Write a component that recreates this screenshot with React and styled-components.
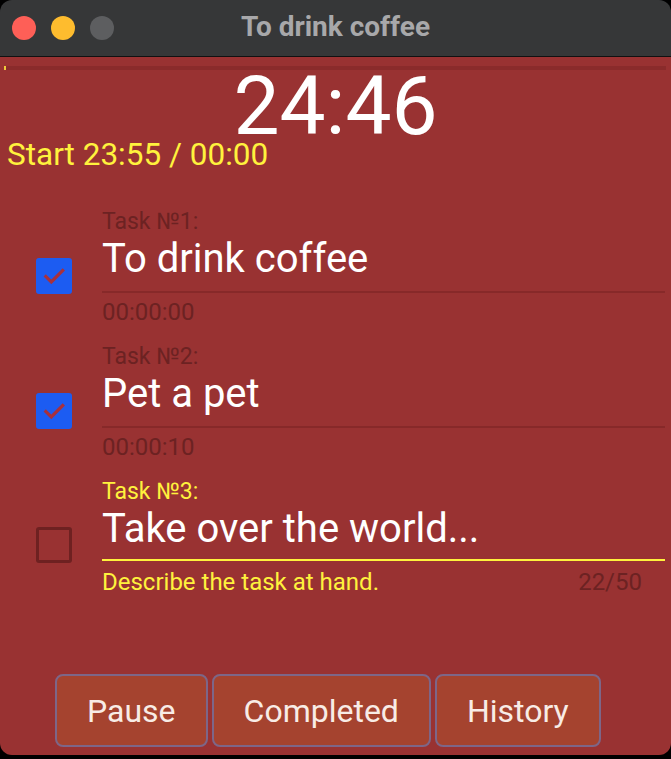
import React from "react";
import styled, { createGlobalStyle } from "styled-components";

const Global = createGlobalStyle`
  html, body { margin: 0; padding: 0; background: #000; }
  body { font-family: Roboto, "Liberation Sans", sans-serif; }
  * { box-sizing: border-box; }
`;

const Window = styled.div`
  width: 671px;
  height: 759px;
  background: #000;
  display: flex;
  flex-direction: column;
`;

const TitleBar = styled.div`
  height: 57px;
  background: #363738;
  border-top-left-radius: 12px;
  border-top-right-radius: 12px;
  border-bottom: 1px solid #111;
  display: flex;
  align-items: center;
  position: relative;
  padding-left: 12px;
  gap: 15px;
`;

const Light = styled.span`
  width: 24px;
  height: 24px;
  border-radius: 50%;
  background: ${(p) => p.$c};
`;

const Title = styled.div`
  position: absolute;
  left: 0;
  right: 0;
  top: 0;
  bottom: 0;
  display: flex;
  align-items: center;
  justify-content: center;
  font-weight: 700;
  font-size: 28px;
  color: #a8a8aa;
  padding-bottom: 3px;
`;

const Body = styled.div`
  flex: 1;
  background: #993232;
  border-bottom-left-radius: 12px;
  border-bottom-right-radius: 12px;
  display: flex;
  flex-direction: column;
  margin-bottom: 4px;
`;

const Progress = styled.div`
  margin: 9px 5px 0 4px;
  height: 4px;
  background: #8a2b2b;
  position: relative;
`;

const ProgressFill = styled.div`
  height: 100%;
  background: #f0c93a;
`;

const Timer = styled.div`
  font-size: 82px;
  line-height: 1;
  color: #fff;
  text-align: center;
  margin-top: -5px;
`;

const StartLine = styled.div`
  font-size: 31.5px;
  line-height: 1;
  color: #fff23d;
  padding-left: 7px;
  margin-top: -8px;
`;

const Tasks = styled.div`
  display: flex;
  flex-direction: column;
  margin-top: 39px;
`;

const TaskRow = styled.div`
  display: grid;
  grid-template-columns: 102px 1fr;
  padding-right: 6px;
  height: 135px;
`;

const CheckCell = styled.div`
  display: flex;
  align-items: flex-start;
  padding-left: 36px;
  padding-top: ${(p) => (p.$active ? 47 : 48)}px;
`;

const Box = styled.div`
  width: 36px;
  height: 36px;
  border-radius: 3px;
  background: ${(p) => (p.$checked ? "#1c5cf2" : "transparent")};
  border: ${(p) => (p.$checked ? "none" : "3px solid #6e2121")};
  display: flex;
  align-items: center;
  justify-content: center;
`;

const Field = styled.div`
  display: flex;
  flex-direction: column;
`;

const Label = styled.div`
  font-size: 23px;
  line-height: 24px;
  color: ${(p) => (p.$active ? "#fff23d" : "#6c2222")};
`;

const Value = styled.div`
  font-size: 40px;
  line-height: 48px;
  color: #fff;
  padding-top: 1px;
  padding-bottom: ${(p) => (p.$active ? 6 : 8)}px;
  border-bottom: ${(p) => (p.$active ? "2px solid #fff23d" : "2px solid #872929")};
`;

const Helper = styled.div`
  display: flex;
  justify-content: space-between;
  font-size: 24px;
  line-height: 24px;
  padding-top: ${(p) => (p.$active ? 9 : 7)}px;
  padding-right: 23px;
  color: ${(p) => (p.$active ? "#fff23d" : "#6c2222")};
`;

const Counter = styled.span`
  color: #6c2222;
`;

const Buttons = styled.div`
  margin-top: auto;
  margin-bottom: 8px;
  display: flex;
  gap: 4px;
  padding-left: 55px;
`;

const Button = styled.button`
  height: 73px;
  padding: 0 30px;
  background: #a5432f;
  border: 2px solid #7d6688;
  border-radius: 8px;
  color: #f8ece6;
  font-family: Roboto, "Liberation Sans", sans-serif;
  font-size: 32px;
`;

const Check = () => (
  <svg width="26" height="26" viewBox="0 0 24 24">
    <path d="M4.5 12.5 L9.5 17.5 L20 7" fill="none" stroke="#a8303c" strokeWidth="3" strokeLinecap="square" />
  </svg>
);

const tasks = [
  { n: 1, text: "To drink coffee", time: "00:00:00", checked: true },
  { n: 2, text: "Pet a pet", time: "00:00:10", checked: true },
  { n: 3, text: "Take over the world...", active: true, helper: "Describe the task at hand.", count: "22/50" },
];

export default function App() {
  return (
    <Window>
      <Global />
      <TitleBar>
        <Light $c="#fe5f57" />
        <Light $c="#febc2e" />
        <Light $c="#5d5e60" />
        <Title>To drink coffee</Title>
      </TitleBar>
      <Body>
        <Progress>
          <ProgressFill style={{ width: "2px" }} />
        </Progress>
        <Timer>24:46</Timer>
        <StartLine>Start 23:55 / 00:00</StartLine>
        <Tasks>
          {tasks.map((t) => (
            <TaskRow key={t.n}>
              <CheckCell $active={t.active}>
                <Box $checked={t.checked}>{t.checked && <Check />}</Box>
              </CheckCell>
              <Field>
                <Label $active={t.active}>Task №{t.n}:</Label>
                <Value $active={t.active}>{t.text}</Value>
                <Helper $active={t.active}>
                  <span>{t.active ? t.helper : t.time}</span>
                  {t.count && <Counter>{t.count}</Counter>}
                </Helper>
              </Field>
            </TaskRow>
          ))}
        </Tasks>
        <Buttons>
          <Button>Pause</Button>
          <Button>Completed</Button>
          <Button>History</Button>
        </Buttons>
      </Body>
    </Window>
  );
}
